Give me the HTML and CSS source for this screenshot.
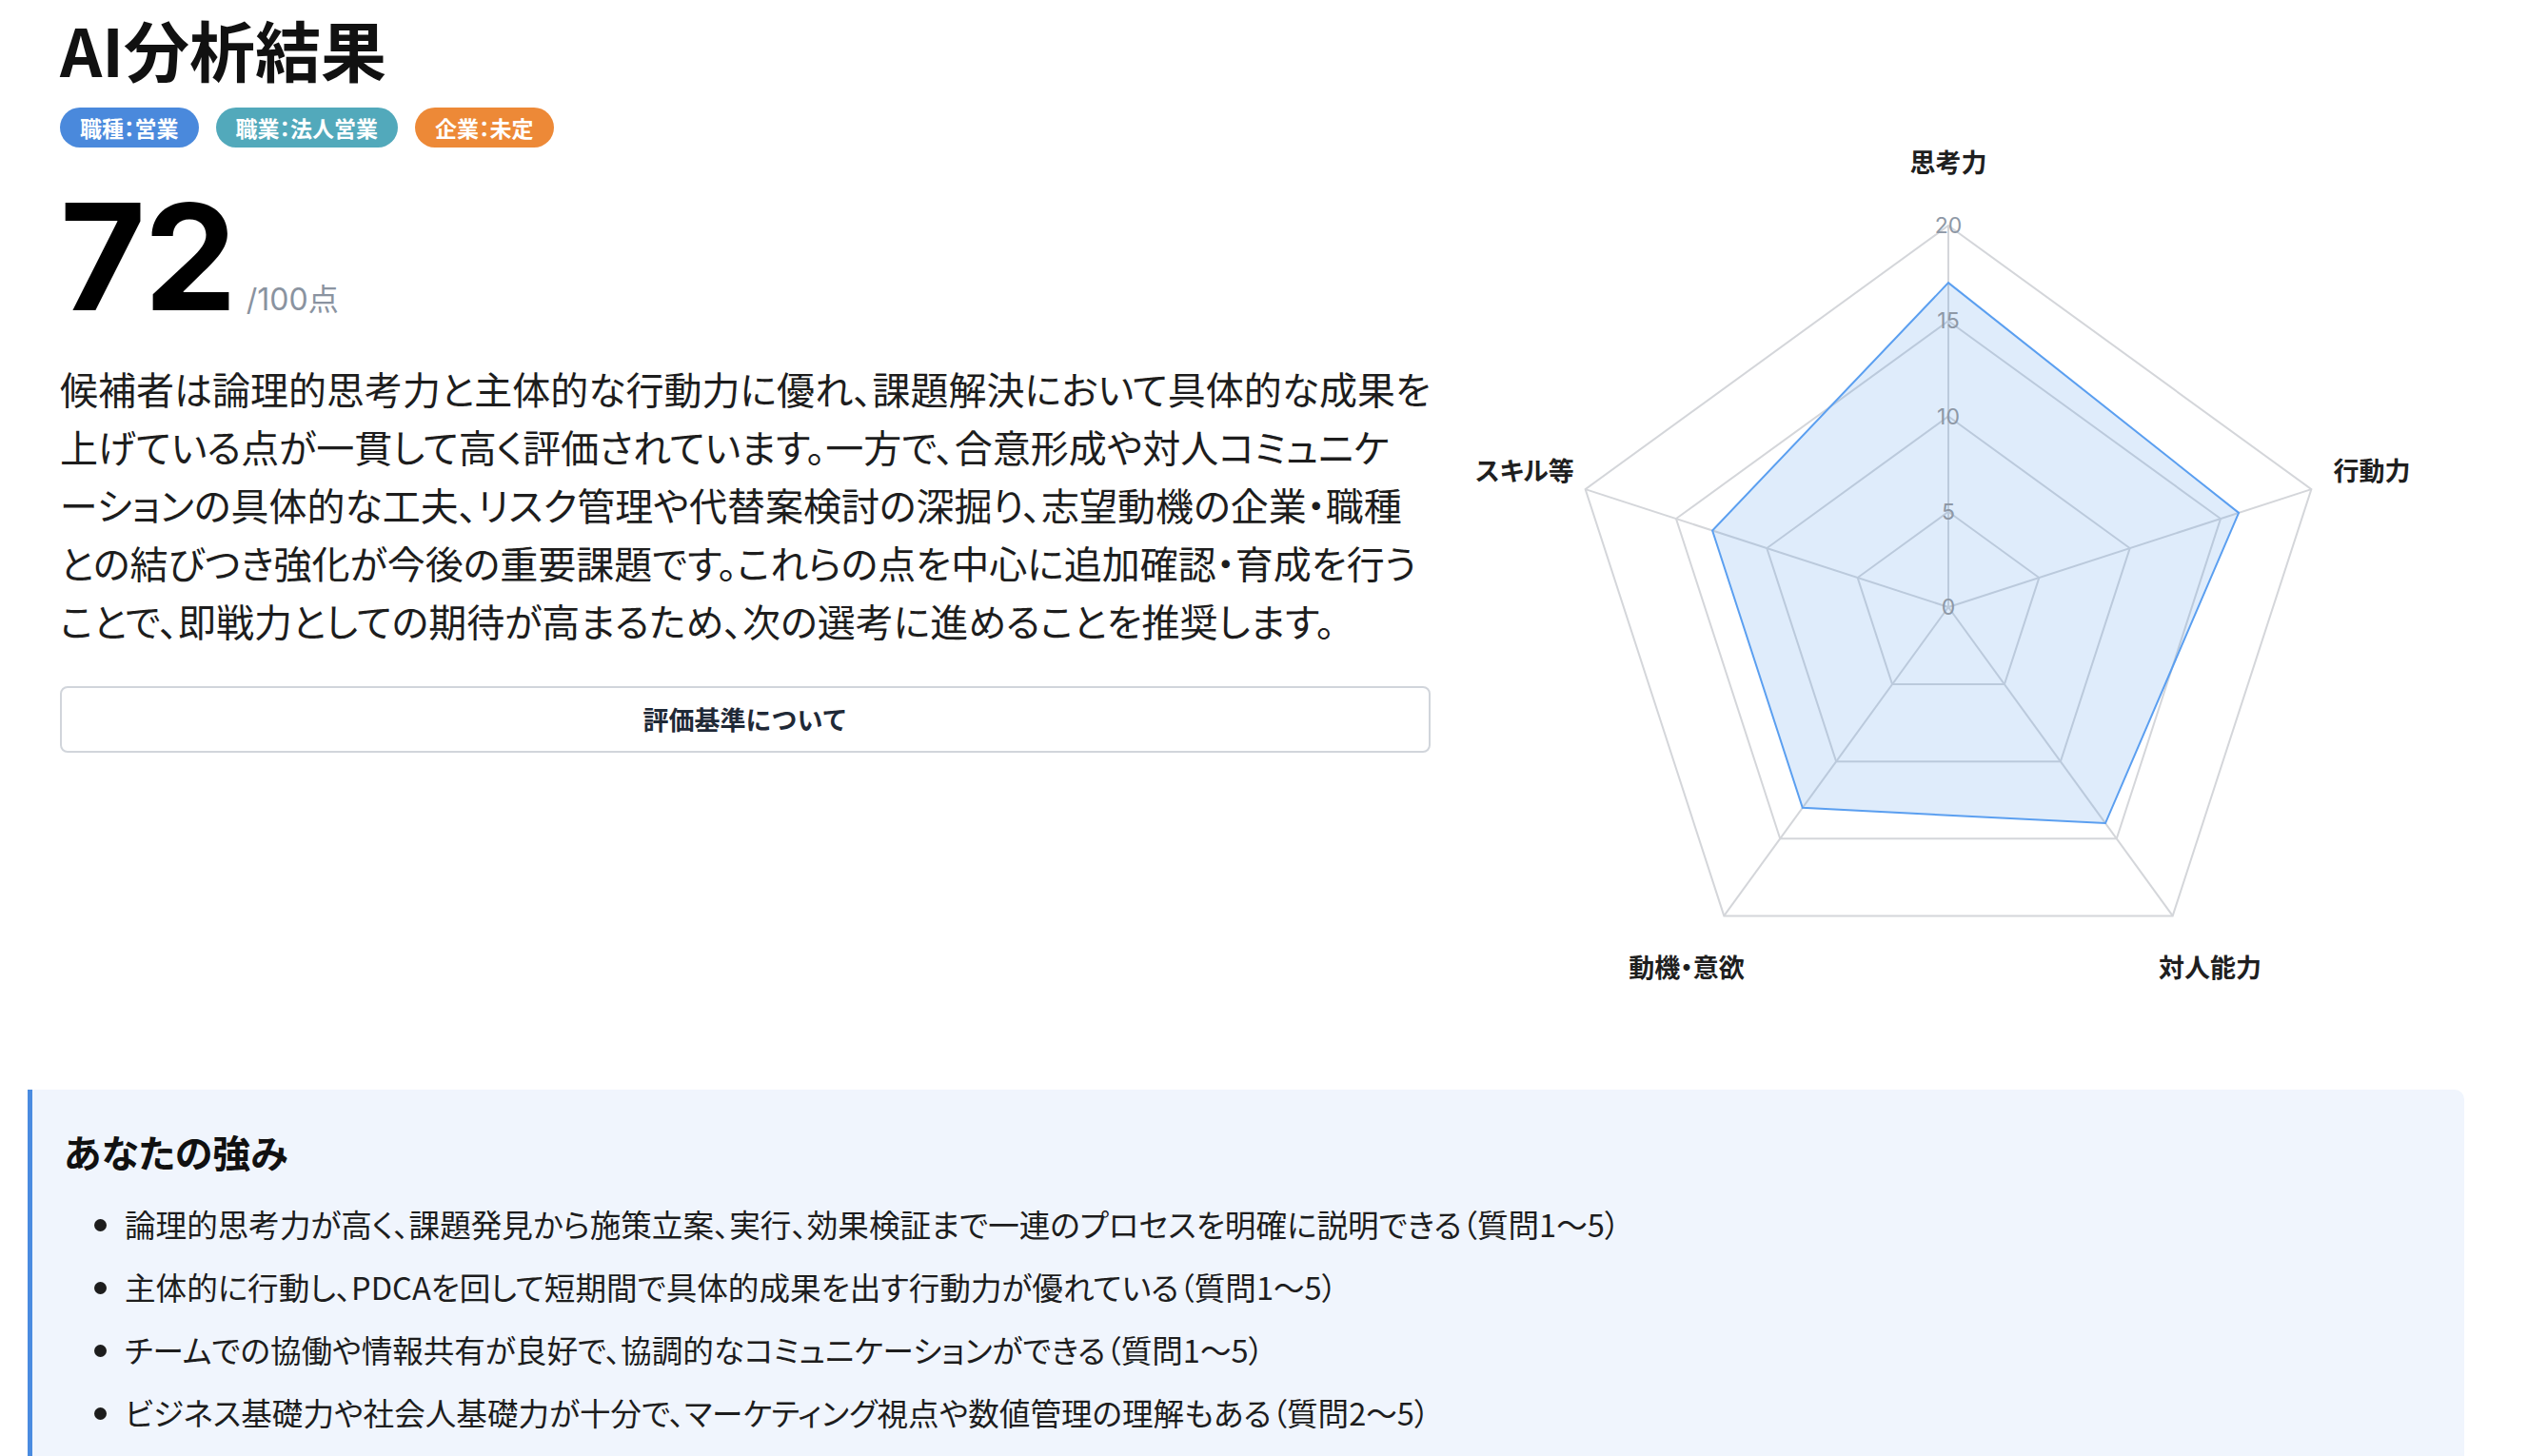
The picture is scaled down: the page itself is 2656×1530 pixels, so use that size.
FILE: index.html
```html
<!DOCTYPE html>
<html lang="ja">
<head>
    <meta charset="UTF-8">
    <meta name="viewport" content="width=device-width, initial-scale=1.0">
    <title>AI分析結果</title>
    <link rel="stylesheet" href="styles.css">
</head>
<body>
    <div class="page">
        <section class="summary">
            <div class="summary-main">
                <h1 class="page-title">AI分析結果</h1>

                <!-- Tags -->
                <div class="tags">
                    <span class="tag tag-blue">職種：営業</span>
                    <span class="tag tag-teal">職業：法人営業</span>
                    <span class="tag tag-orange">企業：未定</span>
                </div>

                <!-- Score -->
                <div class="score">
                    <span class="score-value">72</span>
                    <span class="score-max">/100点</span>
                </div>

                <p class="summary-text">
                    候補者は論理的思考力と主体的な行動力に優れ、課題解決において具体的な成果を<br>
                    上げている点が一貫して高く評価されています。一方で、合意形成や対人コミュニケ<br>
                    ーションの具体的な工夫、リスク管理や代替案検討の深掘り、志望動機の企業・職種<br>
                    との結びつき強化が今後の重要課題です。これらの点を中心に追加確認・育成を行う<br>
                    ことで、即戦力としての期待が高まるため、次の選考に進めることを推奨します。
                </p>

                <button type="button" class="btn-criteria">評価基準について</button>
            </div>

            <!-- Radar chart -->
            <div class="chart">
                <svg viewBox="0 0 1020 1100" xmlns="http://www.w3.org/2000/svg">
                    <g class="grid">
                        <polygon points="510,237 891.37,514.08 745.70,962.42 274.30,962.42 128.63,514.08"/>
                        <polygon points="510,337.25 796.03,545.06 686.78,881.31 333.22,881.31 223.97,545.06"/>
                        <polygon points="510,437.5 700.69,576.04 627.85,800.21 392.15,800.21 319.31,576.04"/>
                        <polygon points="510,537.75 605.34,607.02 568.93,719.10 451.07,719.10 414.66,607.02"/>
                        <line x1="510" y1="638" x2="510" y2="237"/>
                        <line x1="510" y1="638" x2="891.37" y2="514.08"/>
                        <line x1="510" y1="638" x2="745.70" y2="962.42"/>
                        <line x1="510" y1="638" x2="274.30" y2="962.42"/>
                        <line x1="510" y1="638" x2="128.63" y2="514.08"/>
                    </g>
                    <polygon class="data" points="510,297.15 815.10,538.87 674.99,865.09 356.79,848.87 262.11,557.46"/>
                    <g class="ticks">
                        <text x="510" y="638">0</text>
                        <text x="510" y="537.75">5</text>
                        <text x="510" y="437.5">10</text>
                        <text x="510" y="337.25">15</text>
                        <text x="510" y="237">20</text>
                    </g>
                    <g class="point-labels">
                        <text x="510" y="169">思考力</text>
                        <text x="955" y="493">行動力</text>
                        <text x="785" y="1015">対人能力</text>
                        <text x="235" y="1015">動機・意欲</text>
                        <text x="65" y="493">スキル等</text>
                    </g>
                </svg>
            </div>
        </section>

        <!-- Strengths -->
        <section class="strengths">
            <h2>あなたの強み</h2>
            <ul>
                <li>論理的思考力が高く、課題発見から施策立案、実行、効果検証まで一連のプロセスを明確に説明できる（質問1〜5）</li>
                <li>主体的に行動し、PDCAを回して短期間で具体的成果を出す行動力が優れている（質問1〜5）</li>
                <li>チームでの協働や情報共有が良好で、協調的なコミュニケーションができる（質問1〜5）</li>
                <li>ビジネス基礎力や社会人基礎力が十分で、マーケティング視点や数値管理の理解もある（質問2〜5）</li>
            </ul>
        </section>
    </div>
</body>
</html>
```

FILE: styles.css
```css
* {
    box-sizing: border-box;
}

body {
    margin: 0;
    background: #fff;
    color: #222;
    font-family: "Noto Sans CJK JP", "Noto Sans", sans-serif;
    font-feature-settings: "palt";
}

.page {
    max-width: 2622px;
    padding: 0 33px 0 29px;
}

.summary {
    display: grid;
    grid-template-columns: 1440px 1fr;
    column-gap: 34px;
    padding: 0 32px 0 34px;
}

.page-title {
    margin: 10px 0 0;
    font-size: 69px;
    line-height: 1.2;
    font-weight: 700;
    color: #111;
}

.tags {
    display: flex;
    gap: 18px;
    margin-top: 20px;
}

.tag {
    padding: 10px 21px;
    border-radius: 21px;
    font-size: 23px;
    line-height: 22px;
    font-weight: 700;
    color: #fff;
}

.tag-blue {
    background: #4a89dc;
}

.tag-teal {
    background: #52a9bb;
}

.tag-orange {
    background: #ed8937;
}

.score {
    display: flex;
    align-items: baseline;
    margin-top: 37px;
}

.score-value {
    font-family: Inter, "Liberation Sans", sans-serif;
    font-size: 155px;
    line-height: 1;
    font-weight: 700;
    letter-spacing: -2px;
    color: #000;
}

.score-max {
    margin-left: 12px;
    font-family: Inter, "Noto Sans CJK JP", sans-serif;
    font-size: 32px;
    color: #8a93a0;
}

.summary-text {
    margin: 31px 0 0;
    font-size: 40px;
    line-height: 61px;
    color: #1d1d1d;
}

.btn-criteria {
    display: block;
    width: 100%;
    height: 70px;
    margin-top: 38px;
    border: 2px solid #d1d5db;
    border-radius: 8px;
    background: #fff;
    font-family: inherit;
    font-size: 27px;
    font-weight: 700;
    color: #1f2937;
    cursor: pointer;
}

.chart svg {
    display: block;
    width: 100%;
    height: 1100px;
}

.grid polygon,
.grid line {
    fill: none;
    stroke: #d4d6da;
    stroke-width: 2;
}

.data {
    fill: rgba(66, 143, 231, 0.17);
    stroke: #5b9ff0;
    stroke-width: 2;
}

.ticks text {
    font-family: Inter, "Noto Sans", sans-serif;
    font-size: 23px;
    fill: #8e98a6;
    text-anchor: middle;
    dominant-baseline: central;
}

.point-labels text {
    font-size: 27px;
    font-weight: 700;
    fill: #1f1f1f;
    text-anchor: middle;
    dominant-baseline: central;
}

.strengths {
    margin-top: 45px;
    padding: 38px 34px 40px 33px;
    background: #f0f5fd;
    border-left: 5px solid #4a8be0;
    border-radius: 0 10px 10px 0;
}

.strengths h2 {
    margin: 0;
    font-size: 40px;
    line-height: 54px;
    font-weight: 700;
    color: #111;
}

.strengths ul {
    margin: 25px 0 0;
    padding-left: 64px;
}

.strengths li {
    margin-bottom: 18px;
    font-size: 32.6px;
    line-height: 48px;
    color: #1d1d1d;
}
```
